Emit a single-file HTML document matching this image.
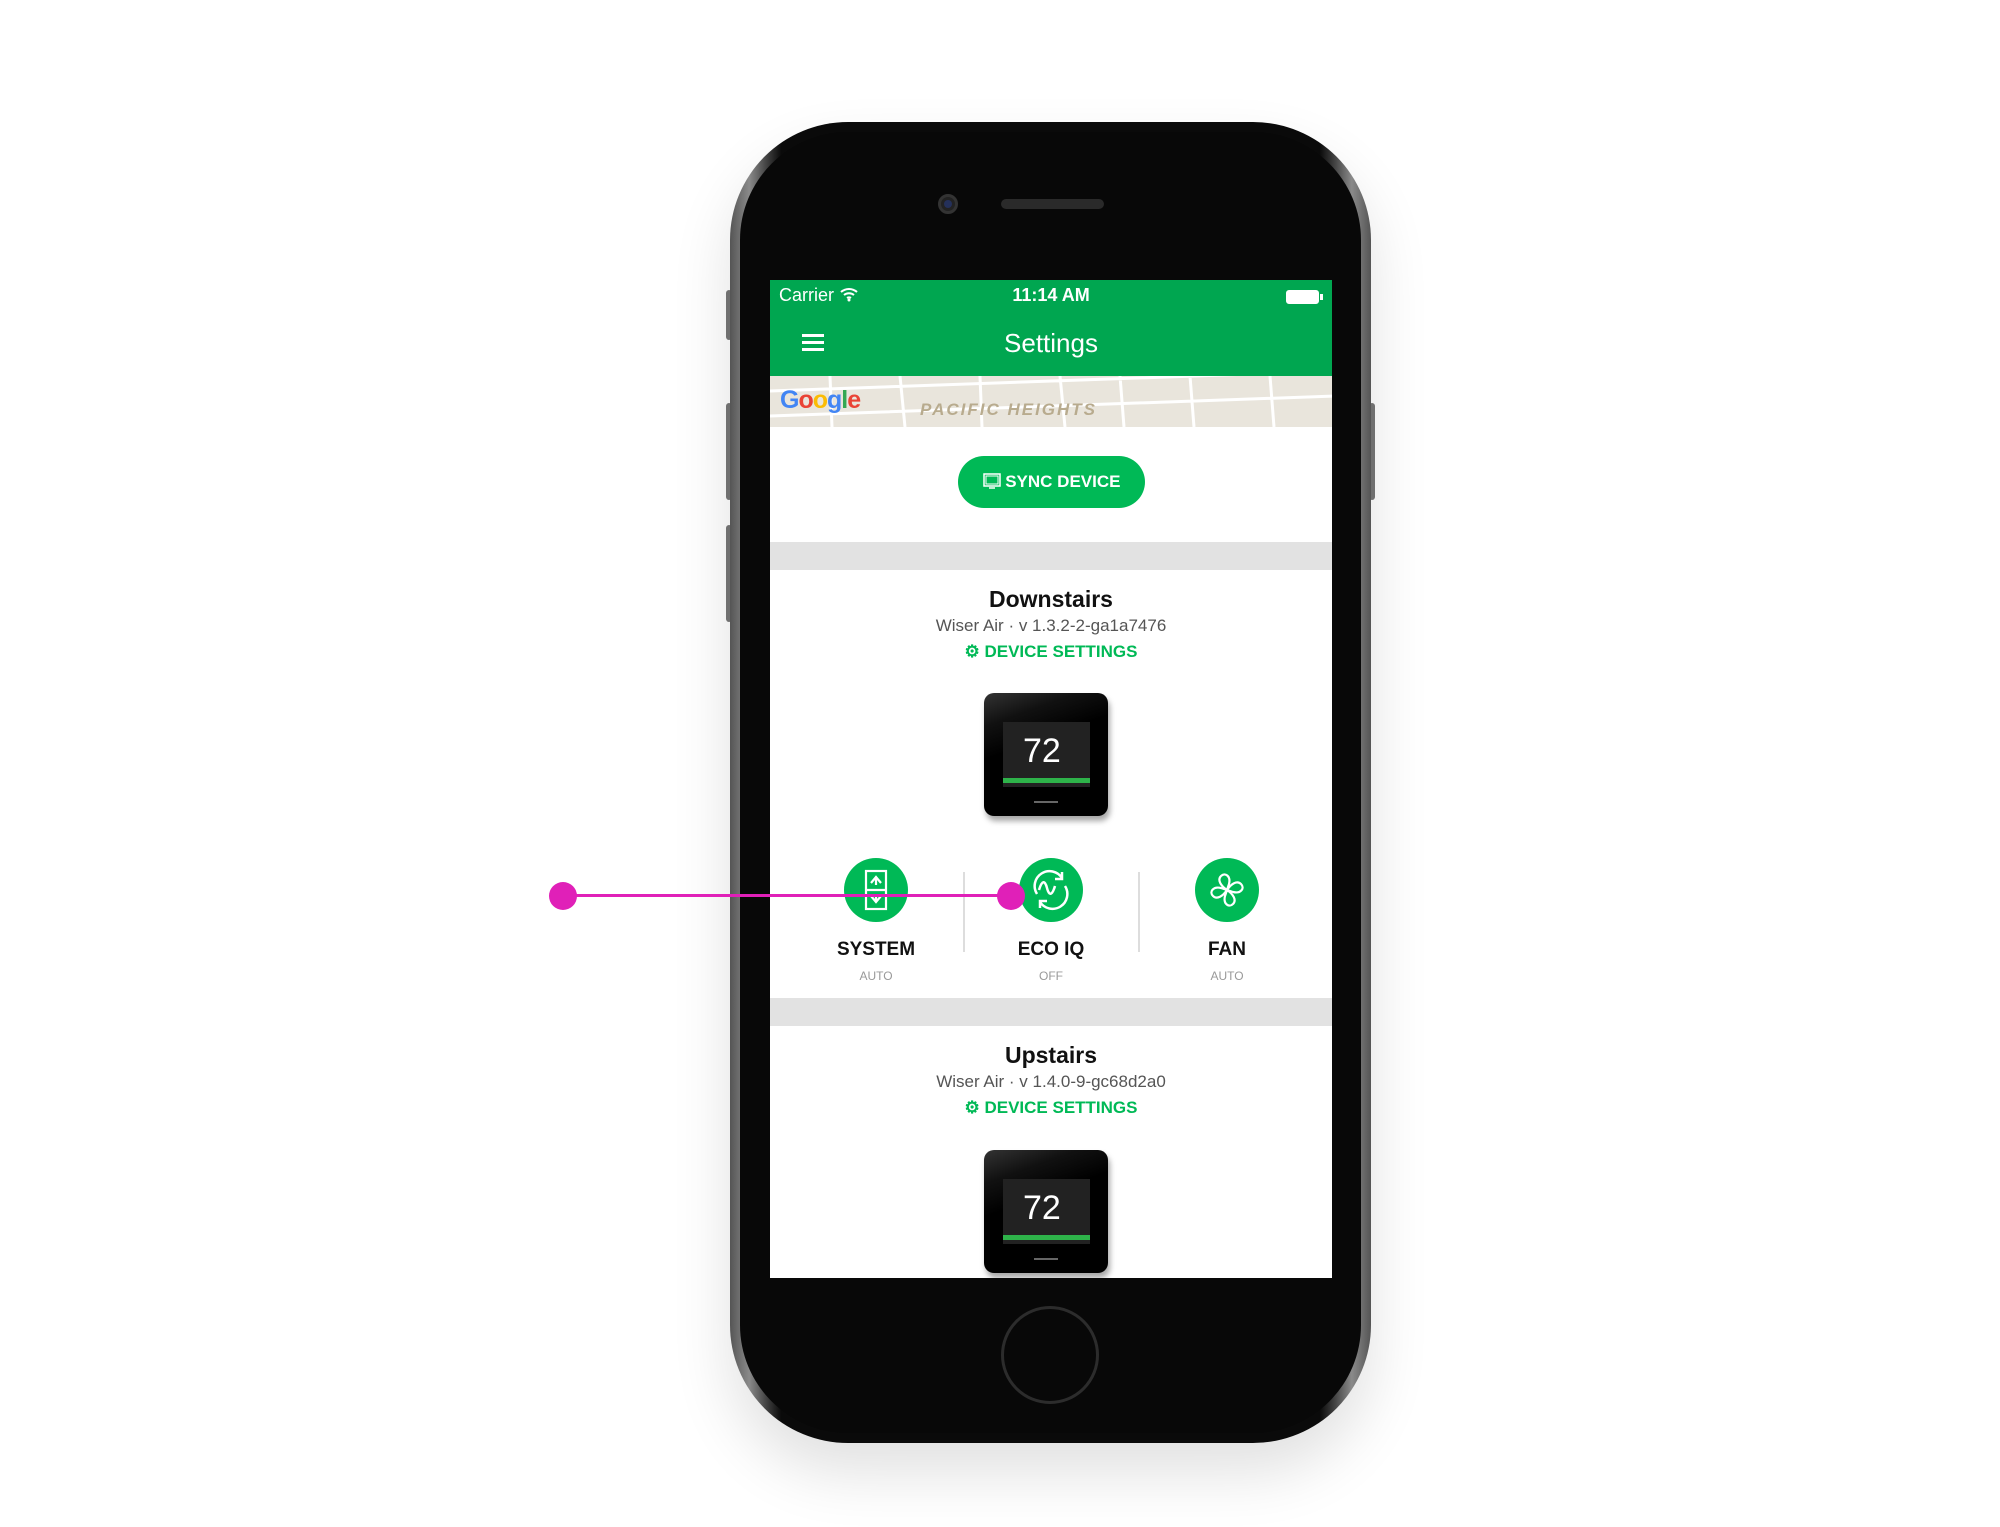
<!DOCTYPE html>
<html><head><meta charset="utf-8"><style>
*{margin:0;padding:0;box-sizing:border-box}
body{width:2000px;height:1527px;background:#fff;position:relative;overflow:hidden;font-family:"Liberation Sans",sans-serif}
.abs{position:absolute}
.phone{left:730px;top:122px;width:641px;height:1321px;border-radius:118px;background:linear-gradient(90deg,#555,#8a8a8a 3%,#3a3a3a 6%,#0a0a0a 8%,#0a0a0a 92%,#3a3a3a 94%,#8a8a8a 97%,#555);box-shadow:0 30px 60px rgba(0,0,0,.12)}
.inner{left:740px;top:132px;width:621px;height:1301px;border-radius:108px;background:#080808}
.screen{left:770px;top:280px;width:562px;height:998px;background:#fff;overflow:hidden}
.c{text-align:center;width:562px;left:0}
.green{color:#00b956}
.circ{width:64px;height:64px;border-radius:50%;background:#00b956}
.lbl{font-weight:bold;font-size:19px;color:#111;width:150px;text-align:center}
.sub{font-size:12px;color:#999;width:150px;text-align:center}
.thermo{width:124px;height:123px;border-radius:10px;background:linear-gradient(160deg,#333 0%,#111 20%,#000 40%,#000);box-shadow:2px 5px 6px rgba(0,0,0,.35)}
</style></head><body>
<div class="abs" style="left:726px;top:290px;width:6px;height:50px;background:#777;border-radius:3px"></div>
<div class="abs" style="left:726px;top:403px;width:6px;height:97px;background:#777;border-radius:3px"></div>
<div class="abs" style="left:726px;top:525px;width:6px;height:97px;background:#777;border-radius:3px"></div>
<div class="abs" style="left:1369px;top:403px;width:6px;height:97px;background:#777;border-radius:3px"></div>
<div class="abs phone"></div>
<div class="abs inner"></div>
<div class="abs" style="left:938px;top:194px;width:20px;height:20px;border-radius:50%;background:#222;border:3px solid #333"><div style="width:8px;height:8px;border-radius:50%;background:#24305a;margin:3px"></div></div>
<div class="abs" style="left:1001px;top:199px;width:103px;height:10px;border-radius:5px;background:#2a2a2a"></div>
<div class="abs" style="left:1001px;top:1306px;width:98px;height:98px;border-radius:50%;border:3px solid #2c2c2c"></div>
<div class="abs screen">
 <div class="abs" style="left:0;top:0;width:562px;height:96px;background:#00a650"></div>
 <div class="abs" style="left:9px;top:5px;color:#fff;font-size:18px">Carrier
  <svg width="20" height="16" viewBox="0 0 20 16" style="vertical-align:-1px"><path d="M2 6a12 12 0 0 1 16 0M5 9a8 8 0 0 1 10 0M8 12a4 4 0 0 1 4 0" stroke="#fff" stroke-width="2" fill="none"/><circle cx="10" cy="14" r="1.5" fill="#fff"/></svg></div>
 <div class="abs c" style="top:5px;color:#fff;font-size:18px;font-weight:bold">11:14 AM</div>
 <div class="abs" style="left:516px;top:10px;width:33px;height:14px;border:1.5px solid #fff;border-radius:3px;background:#fff"></div>
 <div class="abs" style="left:550px;top:14px;width:3px;height:6px;background:#fff"></div>
 <div class="abs" style="left:32px;top:54px;width:22px;height:3px;background:#fff;box-shadow:0 7px 0 #fff,0 14px 0 #fff"></div>
 <div class="abs c" style="top:48px;color:#fff;font-size:26px">Settings</div>
 <div class="abs" style="left:0;top:96px;width:562px;height:51px;background:#e9e5dc;overflow:hidden">
  <svg width="562" height="51" class="abs" style="left:0;top:0"><g stroke="#fff" stroke-width="3" fill="none"><path d="M0 15L566 -5M0 40L566 20M130 0L135 51M210 0L212 51M290 0L295 51M350 0L354 51M420 0L424 51M500 0L504 51M60 0L62 51"/></g></svg>
  <div class="abs" style="left:10px;top:10px;font-size:25px;font-weight:bold;letter-spacing:-1px"><span style="color:#4285f4">G</span><span style="color:#ea4335">o</span><span style="color:#fbbc05">o</span><span style="color:#4285f4">g</span><span style="color:#34a853">l</span><span style="color:#ea4335">e</span></div>
  <div class="abs" style="left:150px;top:24px;font-size:17px;font-style:italic;font-weight:bold;color:#b8ab8e;letter-spacing:2px">PACIFIC HEIGHTS</div>
 </div>
 <div class="abs" style="left:188px;top:176px;width:187px;height:52px;border-radius:26px;background:#00b956;color:#fff;font-size:17px;font-weight:bold;text-align:center;line-height:52px">
  <svg width="18" height="16" viewBox="0 0 18 16" style="vertical-align:-2px"><rect x="1" y="1" width="16" height="12" fill="none" stroke="#fff" stroke-width="1.5"/><rect x="3" y="3" width="12" height="8" fill="none" stroke="#fff"/><path d="M6 15h6" stroke="#fff" stroke-width="1.5"/></svg> SYNC DEVICE</div>
 <div class="abs" style="left:0;top:262px;width:562px;height:28px;background:#e2e2e2"></div>
 <div class="abs c" style="top:306px;font-size:23px;font-weight:bold;color:#111">Downstairs</div>
 <div class="abs c" style="top:336px;font-size:17px;color:#555">Wiser Air · v 1.3.2-2-ga1a7476</div>
 <div class="abs c green" style="top:362px;font-size:17px;font-weight:bold">⚙ DEVICE SETTINGS</div>
 <div class="abs thermo" style="left:214px;top:413px"><div class="abs" style="left:19px;top:29px;width:87px;height:65px;background:#222"><div class="abs" style="left:20px;top:10px;color:#fff;font-size:34px">72</div><div class="abs" style="left:0;top:56px;width:87px;height:5px;background:#2eb34a"></div></div><div class="abs" style="left:50px;top:108px;width:24px;height:2px;background:#666"></div></div>
 <div class="abs circ" style="left:74px;top:578px"><svg width="64" height="64"><g stroke="#fff" stroke-width="2.2" fill="none"><rect x="22" y="13" width="20" height="38"/><path d="M22 32h20M27 25l5-6 5 6M32 19v8M27 38l5 6 5-6M32 44v-8"/></g></svg></div>
 <div class="abs circ" style="left:249px;top:578px"><svg width="64" height="64"><g stroke="#fff" stroke-width="2.5" fill="none"><path d="M18 36a14 14 0 0 1 25-16M46 28a14 14 0 0 1-25 16M20 32c3-10 6-10 8-2s5 8 8-2M43 14v7h-7M21 50v-7h7"/></g></svg></div>
 <div class="abs circ" style="left:425px;top:578px"><svg width="64" height="64"><g stroke="#fff" stroke-width="2.2" fill="none"><path d="M32 32c-6-4-10-10-6-14s10 0 8 8zM32 32c4-6 10-10 14-6s0 10-8 8zM32 32c6 4 10 10 6 14s-10 0-8-8zM32 32c-4 6-10 10-14 6s0-10 8-8z"/></g></svg></div>
 <div class="abs" style="left:193px;top:592px;width:2px;height:80px;background:#ddd"></div>
 <div class="abs" style="left:368px;top:592px;width:2px;height:80px;background:#ddd"></div>
 <div class="abs lbl" style="left:31px;top:659px">SYSTEM</div>
 <div class="abs lbl" style="left:206px;top:659px">ECO IQ</div>
 <div class="abs lbl" style="left:382px;top:659px">FAN</div>
 <div class="abs sub" style="left:31px;top:689px">AUTO</div>
 <div class="abs sub" style="left:206px;top:689px">OFF</div>
 <div class="abs sub" style="left:382px;top:689px">AUTO</div>
 <div class="abs" style="left:0;top:718px;width:562px;height:28px;background:#e2e2e2"></div>
 <div class="abs c" style="top:762px;font-size:23px;font-weight:bold;color:#111">Upstairs</div>
 <div class="abs c" style="top:792px;font-size:17px;color:#555">Wiser Air · v 1.4.0-9-gc68d2a0</div>
 <div class="abs c green" style="top:818px;font-size:17px;font-weight:bold">⚙ DEVICE SETTINGS</div>
 <div class="abs thermo" style="left:214px;top:870px"><div class="abs" style="left:19px;top:29px;width:87px;height:65px;background:#222"><div class="abs" style="left:20px;top:10px;color:#fff;font-size:34px">72</div><div class="abs" style="left:0;top:56px;width:87px;height:5px;background:#2eb34a"></div></div><div class="abs" style="left:50px;top:108px;width:24px;height:2px;background:#666"></div></div>
</div>
<div class="abs" style="left:563px;top:894px;width:447px;height:3px;background:#e020b8"></div>
<div class="abs" style="left:549px;top:882px;width:28px;height:28px;border-radius:50%;background:#e020b8"></div>
<div class="abs" style="left:997px;top:882px;width:28px;height:28px;border-radius:50%;background:#e020b8"></div>
</body></html>
